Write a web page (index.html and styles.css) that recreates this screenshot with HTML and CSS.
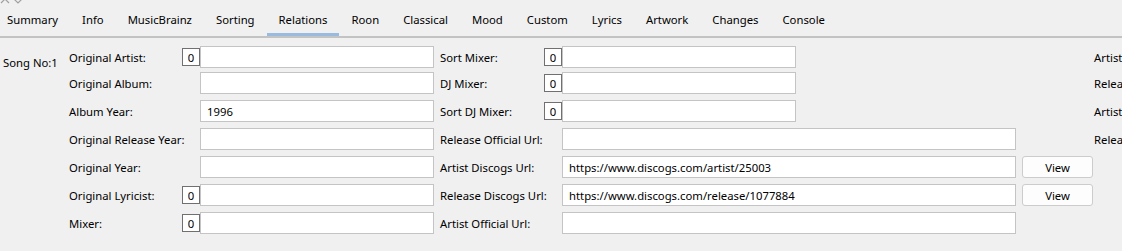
FILE: index.html
```html
<!DOCTYPE html>
<html lang="en">
<head>
    <meta charset="UTF-8">
    <meta name="viewport" content="width=device-width, initial-scale=1.0">
    <title>Tag Editor - Relations</title>
    <link rel="stylesheet" href="styles.css">
</head>
<body>
    <div class="chevrons">
        <svg width="26" height="6" viewBox="0 0 26 6">
            <polyline points="1,5 5,1 9,5" fill="none" stroke="#a0a0a0" stroke-width="1.2"/>
            <polyline points="14,1 18,5 22,1" fill="none" stroke="#a0a0a0" stroke-width="1.2"/>
        </svg>
    </div>

    <div class="tabs">
        <span class="tab first">Summary</span>
        <span class="tab">Info</span>
        <span class="tab">MusicBrainz</span>
        <span class="tab">Sorting</span>
        <span class="tab active">Relations</span>
        <span class="tab">Roon</span>
        <span class="tab">Classical</span>
        <span class="tab">Mood</span>
        <span class="tab">Custom</span>
        <span class="tab">Lyrics</span>
        <span class="tab">Artwork</span>
        <span class="tab">Changes</span>
        <span class="tab">Console</span>
    </div>

    <div class="form">
        <div class="row">
            <span class="song">Song No:1</span>
            <span class="lbl1">Original Artist:</span>
            <span class="box box1">0</span>
            <div class="field in1"></div>
            <span class="lbl2">Sort Mixer:</span>
            <span class="box box2">0</span>
            <div class="field in2 short"></div>
            <span class="lbl3">Artist</span>
        </div>
        <div class="row">
            <span class="lbl1">Original Album:</span>
            <div class="field in1"></div>
            <span class="lbl2">DJ Mixer:</span>
            <span class="box box2">0</span>
            <div class="field in2 short"></div>
            <span class="lbl3">Release</span>
        </div>
        <div class="row">
            <span class="lbl1">Album Year:</span>
            <div class="field in1">1996</div>
            <span class="lbl2">Sort DJ Mixer:</span>
            <span class="box box2">0</span>
            <div class="field in2 short"></div>
            <span class="lbl3">Artist</span>
        </div>
        <div class="row">
            <span class="lbl1">Original Release Year:</span>
            <div class="field in1"></div>
            <span class="lbl2">Release Official Url:</span>
            <div class="field in2"></div>
            <span class="lbl3">Release</span>
        </div>
        <div class="row">
            <span class="lbl1">Original Year:</span>
            <div class="field in1"></div>
            <span class="lbl2">Artist Discogs Url:</span>
            <div class="field in2">https://www.discogs.com/artist/25003</div>
            <span class="button">View</span>
        </div>
        <div class="row">
            <span class="lbl1">Original Lyricist:</span>
            <span class="box box1">0</span>
            <div class="field in1"></div>
            <span class="lbl2">Release Discogs Url:</span>
            <div class="field in2">https://www.discogs.com/release/1077884</div>
            <span class="button">View</span>
        </div>
        <div class="row">
            <span class="lbl1">Mixer:</span>
            <span class="box box1">0</span>
            <div class="field in1"></div>
            <span class="lbl2">Artist Official Url:</span>
            <div class="field in2"></div>
        </div>
    </div>
</body>
</html>
```

FILE: styles.css
```css
:root {
    --bg: #f0f0f0;
    --text: #000000;
    --field-border: #c4c4c4;
    --box-border: #707070;
    --tab-line: #c3c3c3;
    --tab-active: #99bbe0;
}

html {
    background-color: var(--bg);
    color: var(--text);
    font-family: "Noto Sans", "Open Sans", sans-serif;
    font-size: 11.3px;
}

body {
    margin: 0;
    padding: 0;
    width: 1122px;
    height: 251px;
    overflow: hidden;
}

.chevrons {
    height: 8px;
    overflow: hidden;
}

.chevrons svg {
    display: block;
    margin-top: -2px;
}

.tabs {
    display: flex;
    box-sizing: border-box;
    height: 30px;
    padding-bottom: 5px;
    border-bottom: 2px solid var(--tab-line);
    white-space: nowrap;
}

.tab {
    position: relative;
    display: flex;
    align-items: center;
    padding: 0 12px;
}

.tab.first { padding-left: 7px; }

.tab.active::after {
    content: "";
    position: absolute;
    left: 0;
    right: 0;
    bottom: -5px;
    height: 3px;
    background-color: var(--tab-active);
}

.form {
    display: flex;
    flex-direction: column;
    gap: 6px;
    padding: 6px 0 0 3px;
}

.row {
    display: grid;
    grid-template-columns: 66px 113px 18px 234px 6px 104px 18px 454px 6px 71px 1fr;
    height: 22px;
    align-items: center;
    white-space: nowrap;
}

.song {
    grid-column: 1;
    align-self: start;
    padding-top: 11px;
}

.lbl1 { grid-column: 2; }
.box1 { grid-column: 3; }
.in1 { grid-column: 4; }
.lbl2 { grid-column: 6; }
.box2 { grid-column: 7; }
.in2 { grid-column: 8; }
.button { grid-column: 10; }
.lbl3 { grid-column: 11; padding-left: 1px; overflow: hidden; }

.box {
    box-sizing: border-box;
    height: 18px;
    border: 1px solid var(--box-border);
    background-color: #ffffff;
    display: flex;
    align-items: center;
    justify-content: center;
}

.field {
    box-sizing: border-box;
    height: 22px;
    border: 1px solid var(--field-border);
    background-color: #ffffff;
    padding: 0 6px;
    display: flex;
    align-items: center;
}

.field.short { width: 234px; }

.button {
    box-sizing: border-box;
    height: 22px;
    border: 1px solid #cccccc;
    border-radius: 3px;
    background-color: #fdfdfd;
    display: flex;
    align-items: center;
    justify-content: center;
}
```
